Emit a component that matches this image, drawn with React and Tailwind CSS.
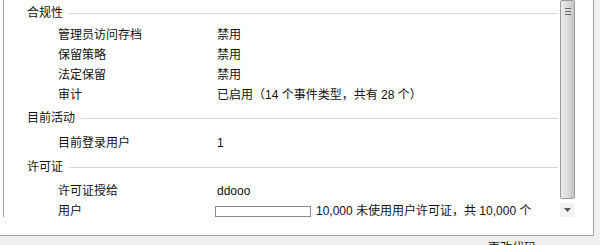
import React from 'react'

const font = { fontFamily: '"Liberation Sans", "Noto Sans CJK SC", sans-serif' }

const sections = [
    {
        title: '合规性',
        gap: 'mt-[2px]',
        top: 'pt-[3px]',
        rows: [
            ['管理员访问存档', '禁用'],
            ['保留策略', '禁用'],
            ['法定保留', '禁用'],
            ['审计', '已启用（14 个事件类型，共有 28 个）'],
        ],
    },
    {
        title: '目前活动',
        gap: 'mt-[5px]',
        top: 'mt-[3px]',
        rows: [['目前登录用户', '1']],
    },
    {
        title: '许可证',
        gap: 'mt-[4px]',
        top: 'mt-[4px]',
        rows: [['许可证授给', 'ddooo'], ['用户', null]],
    },
]

function Header({ title }) {
    return (
        <div className="h-5 flex items-center pl-[23px] pr-[2px]">
            <span className="text-[12px] text-[#111]">{title}</span>
            <div className="flex-1 ml-[6px] h-px bg-[#d9d9d9]" />
        </div>
    )
}

function Row({ label, value }) {
    return (
        <div className="h-5 flex items-center pl-[54px] text-[12px] text-[#111]">
            <span className="w-[159px] shrink-0">{label}</span>
            {value !== null ? (
                <span>{value}</span>
            ) : (
                <div className="flex items-center">
                    <div className="w-[96px] h-[11px] border border-[#8a8a8a] bg-white -ml-[2px]" />
                    <span className="ml-[5px]">10,000 未使用用户许可证，共 10,000 个</span>
                </div>
            )}
        </div>
    )
}

function Scrollbar() {
    return (
        <div className="w-[15px] shrink-0 flex flex-col">
            <div className="flex-1 mb-[4px] border border-[#9c9c9c] rounded-[2px] bg-gradient-to-r from-[#ececec] via-[#dcdcdc] to-[#c4c4c4] flex flex-col items-center pt-[7px] gap-[2px]">
                <div className="w-[6px] h-px bg-[#6a6a6a]" />
                <div className="w-[6px] h-px bg-[#6a6a6a]" />
                <div className="w-[6px] h-px bg-[#6a6a6a]" />
            </div>
            <div className="h-[14px] bg-[#f2f2f2] flex items-center justify-center">
                <svg width="7" height="4" viewBox="0 0 7 4">
                    <path d="M0 0H7L3.5 4Z" fill="#555" />
                </svg>
            </div>
        </div>
    )
}

export default function App() {
    return (
        <div className="w-[600px] h-[245px] bg-[#f0f0f0] overflow-hidden relative" style={font}>
            <div className="w-[594px] h-[236px] bg-white border-r border-b border-[#a5a5a5]">
                <div className="ml-[3px] w-[572px] h-[217px] border-l border-[#a0a0a0] flex overflow-hidden">
                    <div className="flex-1">
                        {sections.map((s) => (
                            <div key={s.title} className={s.top}>
                                <Header title={s.title} />
                                <div className={s.gap}>
                                    {s.rows.map(([l, v]) => (
                                        <Row key={l} label={l} value={v} />
                                    ))}
                                </div>
                            </div>
                        ))}
                    </div>
                    <Scrollbar />
                </div>
            </div>
            <div className="absolute left-[488px] top-[239px] text-[12px] text-[#111]">更改代码</div>
        </div>
    )
}
